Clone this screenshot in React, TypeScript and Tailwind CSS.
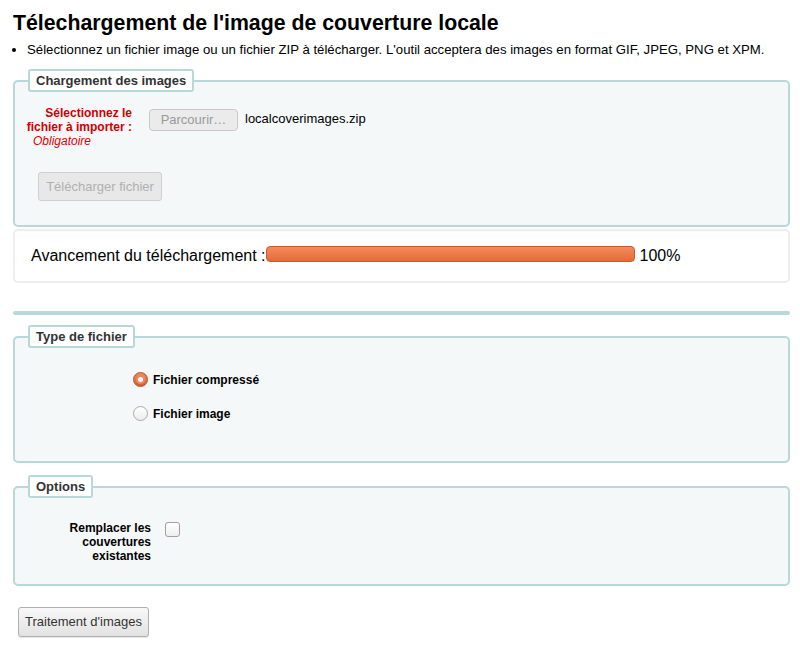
import React from "react";

function Legend({ children }: { children: React.ReactNode }) {
  return (
    <legend className="ml-[13px] rounded-[3px] border-2 border-[#b9d8d9] bg-white px-[6px] pt-[2px] pb-[2px] text-[13px] leading-[15px] font-bold text-[#333]">
      {children}
    </legend>
  );
}

function Radio({ checked }: { checked?: boolean }) {
  if (checked) {
    return (
      <span className="flex h-[15px] w-[15px] items-center justify-center rounded-full border border-[#b4532b] bg-gradient-to-b from-[#f28a5c] to-[#d65c2b]">
        <span className="flex h-[9px] w-[9px] items-center justify-center rounded-full bg-[#ef8a60]">
          <span className="h-[5px] w-[5px] rounded-full bg-white" />
        </span>
      </span>
    );
  }
  return (
    <span className="h-[15px] w-[15px] rounded-full border border-[#a9a9a9] bg-gradient-to-b from-white to-[#ededed]" />
  );
}

export default function App() {
  return (
    <div className="min-h-[658px] bg-white pl-[13px] pr-[10px] font-['Liberation_Sans',Arial,sans-serif] text-black">
      <h1 className="pt-[11px] text-[21.3px] leading-[24px] font-bold">
        Télechargement de l'image de couverture locale
      </h1>
      <ul className="mt-[7px] list-disc pl-[14px] text-[13.2px] leading-[16px]">
        <li>
          Sélectionnez un fichier image ou un fichier ZIP à télécharger. L'outil acceptera des images en format GIF,
          JPEG, PNG et XPM.
        </li>
      </ul>

      <fieldset className="mt-[11px] rounded-[5px] border-2 border-[#b9d8d9] bg-[#f4f8f9] p-0">
        <Legend>Chargement des images</Legend>
        <div className="pt-[14px] pb-[24px]">
          <div className="flex items-start">
            <div className="w-[117px] text-right text-[12px] leading-[14px] font-bold text-[#cc0000]">
              Sélectionnez le
              <br />
              fichier à importer :
            </div>
            <button
              type="button"
              className="mt-[3px] ml-[17px] h-[22px] w-[89px] rounded-[4px] border border-[#c8c8c8] bg-[#ebebeb] text-[13px] text-[#9a9a9a]"
            >
              Parcourir…
            </button>
            <span className="mt-[5px] ml-[7px] text-[13px] leading-[16px]">localcoverimages.zip</span>
          </div>
          <div className="pl-[18px] text-[12px] leading-[14px] italic text-[#dd0000]">Obligatoire</div>
          <button
            type="button"
            className="mt-[24px] ml-[23px] h-[29px] w-[124px] rounded-[3px] border border-[#d0d0d0] bg-[#e8e8e8] text-[13px] text-[#b0b0b0]"
          >
            Télécharger fichier
          </button>
        </div>
      </fieldset>

      <div className="mt-[2px] flex h-[54px] items-center rounded-[5px] border-2 border-[#eeeeee] pl-[16px] text-[16px] leading-[18px]">
        <span>Avancement du téléchargement :</span>
        <span className="mb-[4px] h-[16px] w-[369px] rounded-[4px] border border-[#c95a31] bg-gradient-to-b from-[#f58b5a] to-[#e56a3a]" />
        <span className="ml-[5px]">100%</span>
      </div>

      <div className="mt-[28px] h-[4px] rounded-full bg-[#b9d8d9]" />

      <fieldset className="mt-[10px] rounded-[5px] border-2 border-[#b9d8d9] bg-[#f4f8f9] p-0">
        <Legend>Type de fichier</Legend>
        <div className="flex flex-col gap-[19px] pt-[24px] pb-[40px] pl-[118px]">
          <label className="flex items-center gap-[5px] text-[12px] leading-[14px] font-bold">
            <Radio checked />
            Fichier compressé
          </label>
          <label className="flex items-center gap-[5px] text-[12px] leading-[14px] font-bold">
            <Radio />
            Fichier image
          </label>
        </div>
      </fieldset>

      <fieldset className="mt-[12px] rounded-[5px] border-2 border-[#b9d8d9] bg-[#f4f8f9] p-0">
        <Legend>Options</Legend>
        <div className="flex items-start pt-[23px] pb-[21px]">
          <div className="w-[136px] text-right text-[12px] leading-[14px] font-bold">
            Remplacer les
            <br />
            couvertures
            <br />
            existantes
          </div>
          <span className="mt-[1px] ml-[14px] h-[15px] w-[15px] rounded-[3px] border border-[#a0a0a0] bg-gradient-to-b from-white to-[#eeeeee]" />
        </div>
      </fieldset>

      <button
        type="button"
        className="mt-[21px] ml-[5px] h-[30px] w-[131px] rounded-[3px] border border-[#b0b0b0] bg-gradient-to-b from-[#f8f8f8] to-[#e2e2e2] text-[13px] text-[#333] shadow-[0_1px_1px_rgba(0,0,0,0.1)]"
      >
        Traitement d'images
      </button>
    </div>
  );
}
